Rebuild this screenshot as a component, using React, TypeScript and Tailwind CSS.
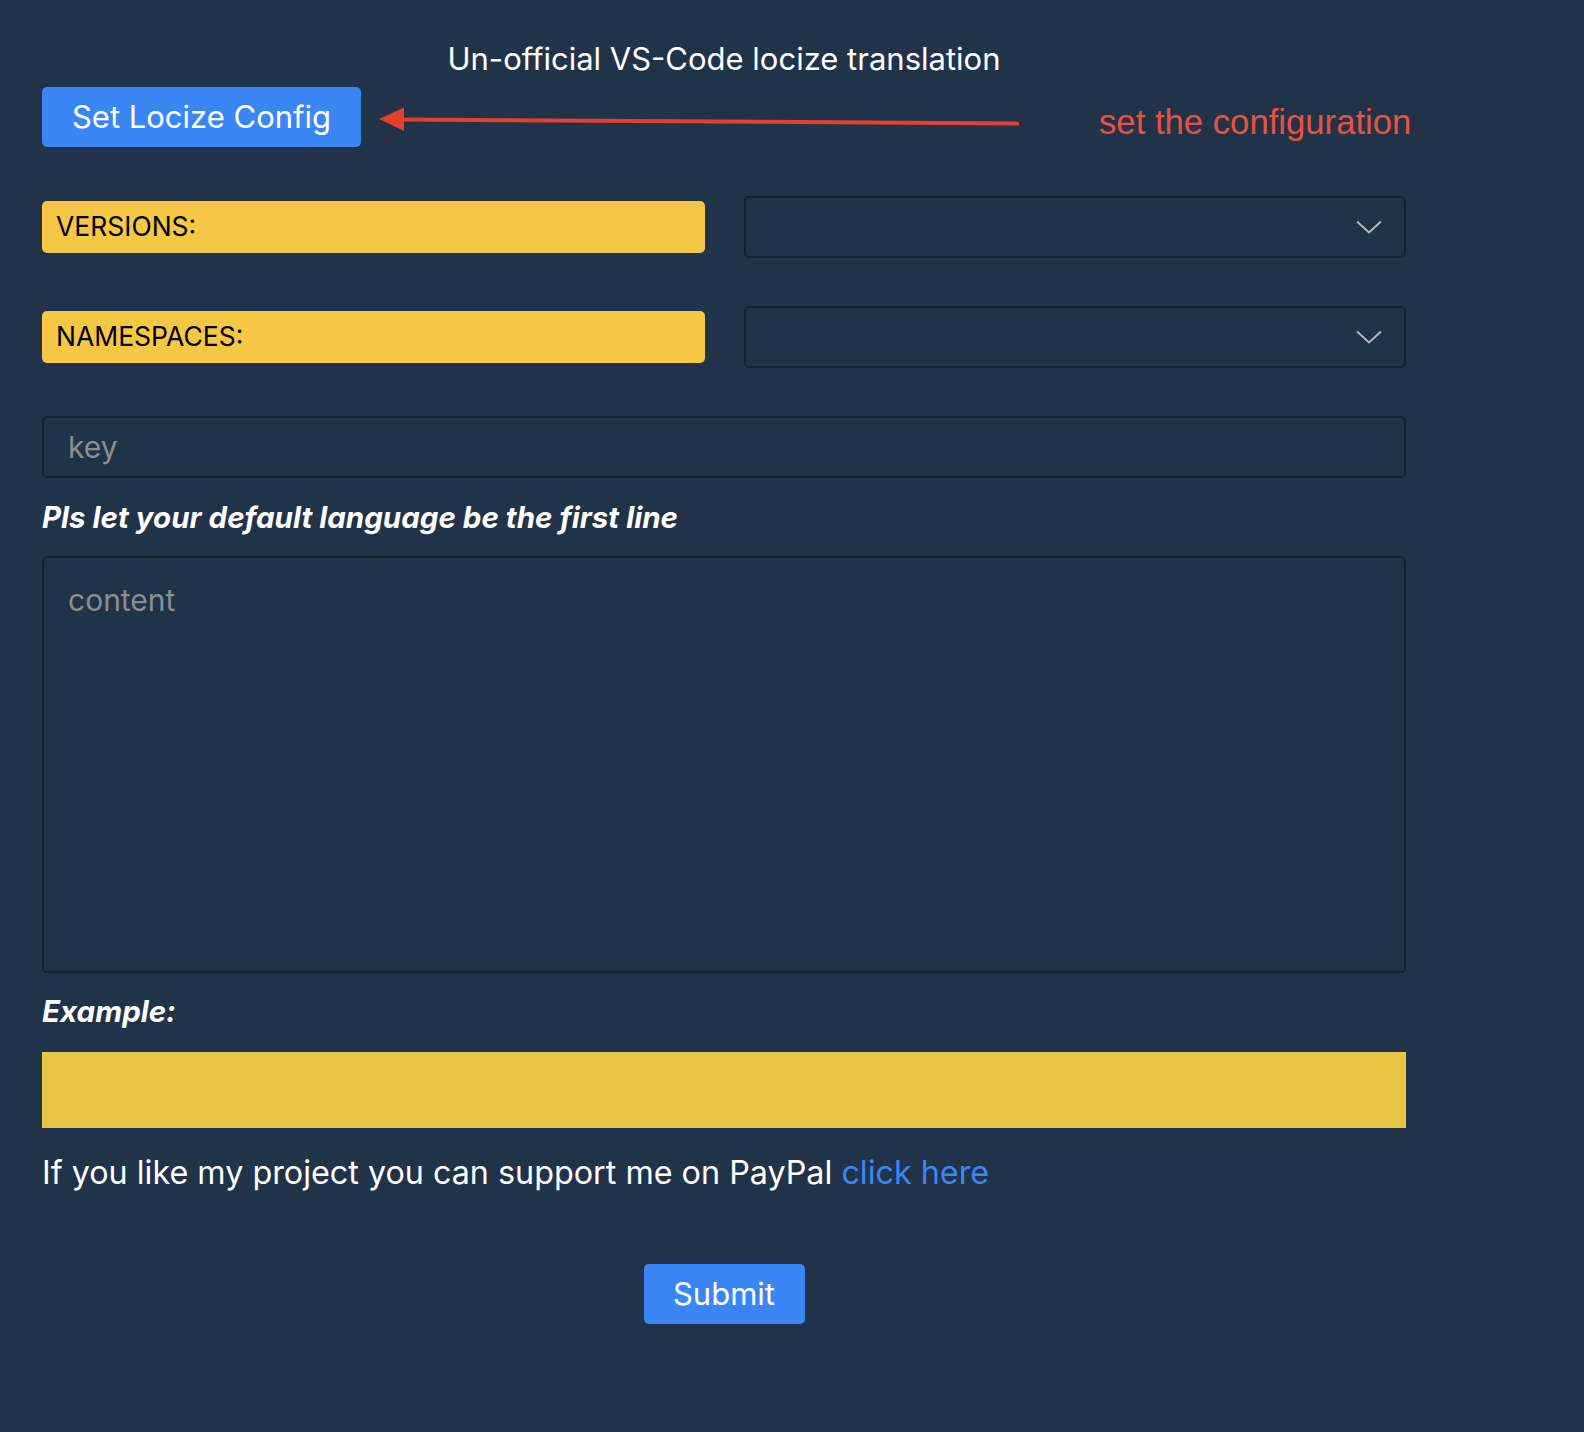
import React from 'react';

const Chevron = () => (
    <svg width="26" height="14" viewBox="0 0 26 14" fill="none" className="shrink-0">
        <path d="M1 1.5L13 12.5L25 1.5" stroke="#b5b7ba" strokeWidth="2" />
    </svg>
);

const SelectRow = ({ label }: { label: string }) => (
    <div className="flex items-center gap-[39px]">
        <div className="flex h-[52px] w-[663px] shrink-0 items-center rounded-[5px] bg-[#f6c744] pl-[14px] text-[26.5px] text-black">
            {label}
        </div>
        <div className="flex h-[62px] flex-1 items-center justify-end rounded-[5px] border-2 border-[#19232f] bg-[#213349] pr-[22px]">
            <Chevron />
        </div>
    </div>
);

export default function App() {
    return (
        <div className="min-h-[1432px] w-full bg-[#213349] font-['Inter','Noto_Sans',sans-serif] text-white">
            <div className="flex w-[1406px] flex-col pl-[42px]">
                {/* header */}
                <div className="pt-[41px] text-center text-[31px] leading-[36px]">
                    Un-official VS-Code locize translation
                </div>

                <div className="mt-[10px] flex h-[60px] items-center whitespace-nowrap">
                    <button className="flex h-[60px] w-[319px] shrink-0 items-center justify-center rounded-[5px] bg-[#3b86f6] text-[31px] text-white">
                        Set Locize Config
                    </button>
                    <svg width="642" height="30" viewBox="0 0 642 30" className="ml-[18px] mt-[6px] shrink-0">
                        <path d="M22 14.5L640 18.5" stroke="#e5402c" strokeWidth="4" />
                        <path d="M0 14L25 2.5V26Z" fill="#e5402c" />
                    </svg>
                    <span className="ml-[78px] mt-[10px] shrink-0 font-['Liberation_Sans',Arial,sans-serif] text-[34.7px] leading-[40px] text-[#e9503f]">
                        set the configuration
                    </span>
                </div>

                <div className="mt-[49px]">
                    <SelectRow label="VERSIONS:" />
                </div>
                <div className="mt-[48px]">
                    <SelectRow label="NAMESPACES:" />
                </div>

                <div className="mt-[48px] flex h-[62px] items-center rounded-[5px] border-2 border-[#19232f] pl-[24px] text-[30px] text-[#8a8d91]">
                    key
                </div>

                <div className="mt-[22px] text-[29.5px] font-bold italic leading-[34px]">
                    Pls let your default language be the first line
                </div>

                <div className="mt-[22px] h-[417px] rounded-[5px] border-2 border-[#19232f] pl-[24px] pt-[20px] text-[30px] text-[#8a8d91]">
                    content
                </div>

                <div className="mt-[21px] text-[29.5px] font-bold italic leading-[34px]">Example:</div>

                <div className="mt-[24px] h-[76px] bg-[#e8c645]" />

                <div className="mt-[25px] text-[32.3px] leading-[40px]">
                    If you like my project you can support me on PayPal{' '}
                    <a className="text-[#3b86f6]">click here</a>
                </div>

                <div className="mt-[71px] flex justify-center">
                    <button className="flex h-[60px] w-[161px] items-center justify-center rounded-[5px] bg-[#3b86f6] text-[31px] text-white">
                        Submit
                    </button>
                </div>
            </div>
        </div>
    );
}
